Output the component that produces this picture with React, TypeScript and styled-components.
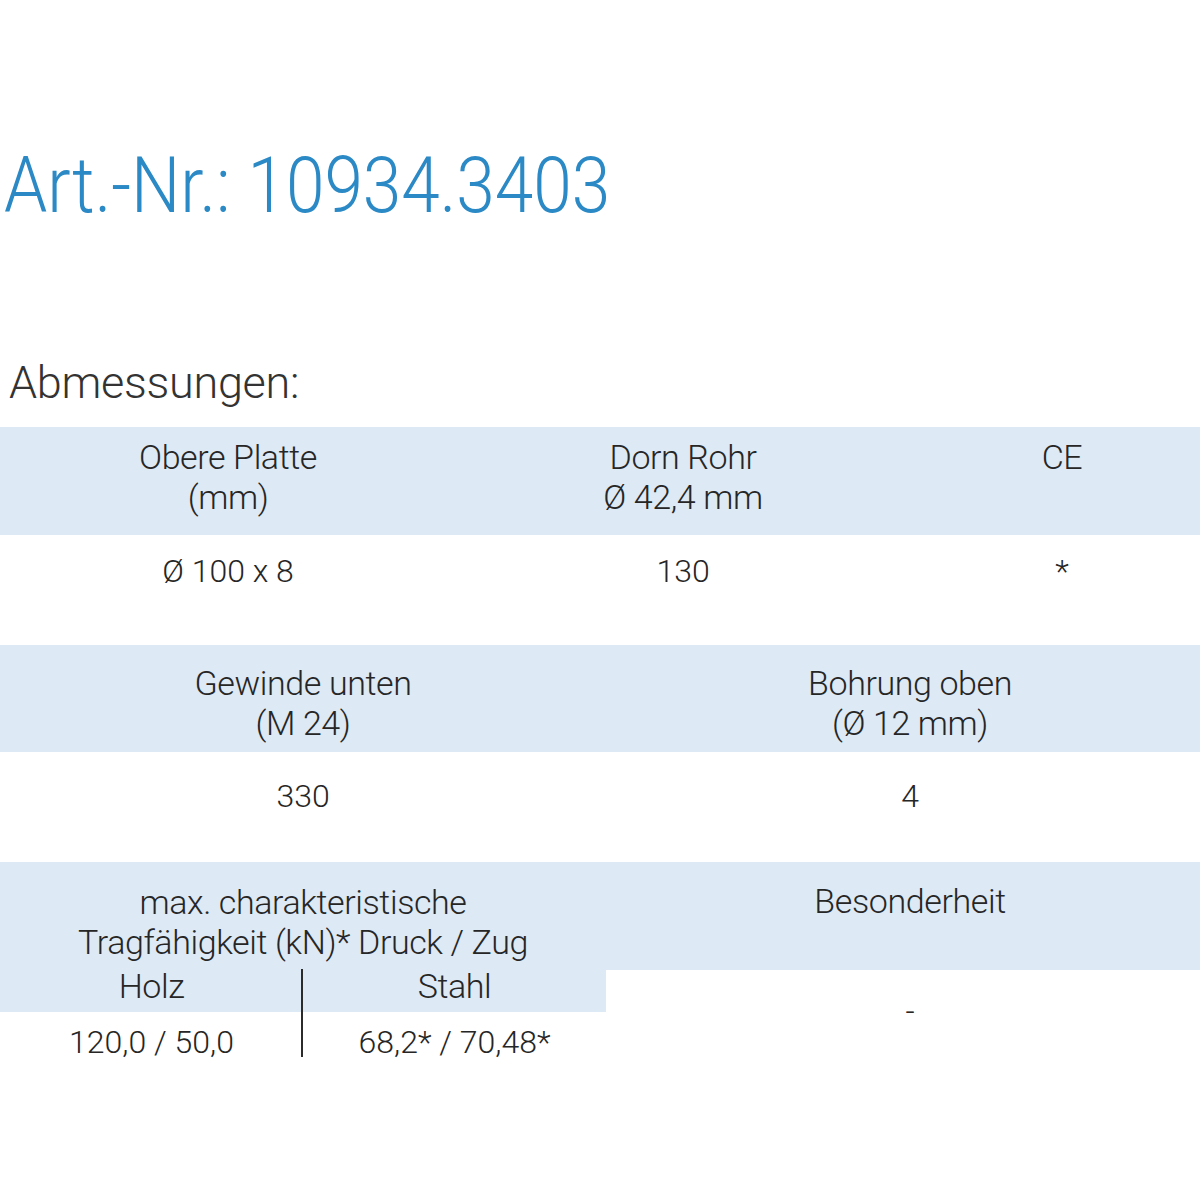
import styled, { createGlobalStyle } from "styled-components";

const GlobalStyle = createGlobalStyle`
  html, body {
    margin: 0;
    padding: 0;
    background: #ffffff;
    overflow: hidden;
  }
  body {
    font-family: Roboto, "Liberation Sans", sans-serif;
    color: #262626;
  }
`;

const Page = styled.div`
  width: 1200px;
  height: 1200px;
  padding-top: 148px;
  box-sizing: border-box;
`;

const Title = styled.h1`
  display: inline-block;
  margin: 0 0 0 4px;
  font-size: 77px;
  line-height: 77px;
  font-weight: 300;
  color: #2b89c5;
  white-space: nowrap;
  transform: scaleX(0.9);
  transform-origin: left center;
`;

const Section = styled.h2`
  margin: 135px 0 0 9px;
  font-size: 45px;
  line-height: 45px;
  font-weight: 300;
  color: #333333;
  letter-spacing: -0.3px;
`;

const Table = styled.div`
  width: 1214px;
  margin-top: 22px;
`;

const Row = styled.div<{ $cols: string }>`
  display: grid;
  grid-template-columns: ${(p) => p.$cols};
`;

const HeadCell = styled.div<{ $pad: number; $h?: number }>`
  background: #dde9f5;
  text-align: center;
  font-size: 34px;
  font-weight: 300;
  line-height: 40px;
  letter-spacing: -0.4px;
  padding-top: ${(p) => p.$pad}px;
  height: ${(p) => p.$h ?? 108}px;
  box-sizing: border-box;
`;

const DataCell = styled.div<{ $pad: number; $h?: number }>`
  text-align: center;
  font-size: 32px;
  font-weight: 300;
  line-height: 36px;
  padding-top: ${(p) => p.$pad}px;
  height: ${(p) => p.$h ?? 110}px;
  box-sizing: border-box;
`;

const Column = styled.div`
  display: flex;
  flex-direction: column;
`;

const SubHead = styled.div<{ $divider?: boolean }>`
  background: #dde9f5;
  text-align: center;
  font-size: 34px;
  font-weight: 300;
  line-height: 36px;
  letter-spacing: -0.4px;
  height: 44px;
  box-sizing: border-box;
  position: relative;
  ${(p) =>
    p.$divider &&
    `&::before {
      content: "";
      position: absolute;
      left: -2px;
      top: 1px;
      bottom: 0;
      width: 2px;
      background: #2b2b2b;
    }`}
`;

const SubData = styled.div<{ $divider?: boolean }>`
  text-align: center;
  font-size: 32px;
  font-weight: 300;
  line-height: 36px;
  padding-top: 12px;
  height: 45px;
  box-sizing: border-box;
  position: relative;
  ${(p) =>
    p.$divider &&
    `&::before {
      content: "";
      position: absolute;
      left: -2px;
      top: 0;
      bottom: 0;
      width: 2px;
      background: #2b2b2b;
    }`}
`;

export default function App() {
  return (
    <>
      <GlobalStyle />
      <Page>
        <Title>Art.-Nr.: 10934.3403</Title>
        <Section>Abmessungen:</Section>
        <Table>
          <Row $cols="456px 454px 304px">
            <HeadCell $pad={10}>
              Obere Platte
              <br />
              (mm)
            </HeadCell>
            <HeadCell $pad={10}>
              Dorn Rohr
              <br />Ø 42,4 mm
            </HeadCell>
            <HeadCell $pad={10}>CE</HeadCell>
          </Row>
          <Row $cols="456px 454px 304px">
            <DataCell $pad={18}>Ø 100 x 8</DataCell>
            <DataCell $pad={18}>130</DataCell>
            <DataCell $pad={18}>*</DataCell>
          </Row>
          <Row $cols="606px 608px">
            <HeadCell $pad={18} $h={107}>
              Gewinde unten
              <br />
              (M 24)
            </HeadCell>
            <HeadCell $pad={18} $h={107}>
              Bohrung oben
              <br />
              (Ø 12 mm)
            </HeadCell>
          </Row>
          <Row $cols="606px 608px">
            <DataCell $pad={26}>330</DataCell>
            <DataCell $pad={26}>4</DataCell>
          </Row>
          <Row $cols="606px 608px">
            <Column>
              <HeadCell $pad={20} $h={106}>
                max. charakteristische
                <br />
                Tragfähigkeit (kN)* Druck / Zug
              </HeadCell>
              <Row $cols="303px 303px">
                <SubHead>Holz</SubHead>
                <SubHead $divider>Stahl</SubHead>
              </Row>
              <Row $cols="303px 303px">
                <SubData>120,0 / 50,0</SubData>
                <SubData $divider>68,2* / 70,48*</SubData>
              </Row>
            </Column>
            <Column>
              <HeadCell $pad={19} $h={108}>
                Besonderheit
              </HeadCell>
              <DataCell $pad={23} $h={90}>
                -
              </DataCell>
            </Column>
          </Row>
        </Table>
      </Page>
    </>
  );
}
